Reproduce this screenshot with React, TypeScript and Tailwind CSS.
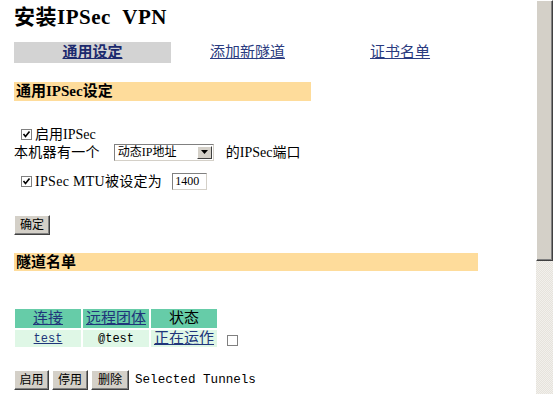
import React from "react";

const serif = { fontFamily: '"Liberation Serif", "Noto Sans CJK SC", serif' };
const mono = { fontFamily: '"Liberation Mono", "Noto Sans CJK SC", monospace' };

function Btn({ children, w }: { children: React.ReactNode; w: string }) {
  return (
    <button className={`${w} h-[20px] bg-[#d4d0c8] border border-t-white border-l-white border-r-[#404040] border-b-[#404040] shadow-[inset_-1px_-1px_0_#808080] text-[12px] leading-none text-black flex items-center justify-center`}>
      {children}
    </button>
  );
}

function Check() {
  return (
    <span className="inline-flex w-[11px] h-[11px] border border-[#808080] bg-white items-center justify-center mr-[3px]">
      <svg width="9" height="9" viewBox="0 0 9 9">
        <path d="M1.5 4 L3.5 6.5 L7.5 1.5" stroke="#000" strokeWidth="1.6" fill="none" />
      </svg>
    </span>
  );
}

export default function App() {
  return (
    <div className="w-[554px] h-[394px] overflow-hidden bg-white flex text-black" style={serif}>
      <div className="flex-1 pl-[14px] pt-[4px]">
        <div className="text-[21px] leading-[26px] font-bold tracking-[0.5px]">安装IPSec&nbsp;&nbsp;VPN</div>
        <div className="mt-[12px] flex items-center h-[21px] text-[15px]">
          <div className="w-[157px] h-[21px] bg-[#d3d3d3] flex items-center justify-center">
            <a className="font-bold underline text-[#1c2a6e]">通用设定</a>
          </div>
          <a className="ml-[39px] underline text-[#2a3b80]">添加新隧道</a>
          <a className="ml-[85px] underline text-[#2a3b80]">证书名单</a>
        </div>
        <div className="mt-[19px] w-[297px] h-[19px] bg-[#fedc9b] flex items-center pl-[2px] text-[15px] font-bold">通用IPSec设定</div>
        <div className="mt-[24px] pl-[7px] flex items-center h-[18px] text-[14px]">
          <Check />启用IPSec
        </div>
        <div className="flex items-center h-[18px] text-[14px]">
          <span className="tracking-[0.3px]">本机器有一个</span>
          <span className="ml-[14px] inline-flex items-center w-[100px] h-[17px] border border-t-[#808080] border-l-[#808080] border-r-[#d4d0c8] border-b-[#d4d0c8] bg-white text-[12px] pl-[3px]">
            <span className="flex-1">动态IP地址</span>
            <span className="w-[15px] h-[13px] bg-[#d4d0c8] border border-t-white border-l-white border-r-[#404040] border-b-[#404040] flex items-center justify-center mr-[1px]">
              <svg width="7" height="4" viewBox="0 0 7 4"><path d="M0 0 H7 L3.5 4 Z" fill="#000" /></svg>
            </span>
          </span>
          <span className="ml-[12px]">的IPSec端口</span>
        </div>
        <div className="pl-[7px] flex items-center h-[18px] text-[14px] mt-[11px]">
          <Check /><span className="tracking-[0.3px]">IPSec MTU被设定为</span>
          <span className="ml-[10px] inline-flex items-center w-[35px] h-[17px] border border-t-[#808080] border-l-[#808080] border-r-[#d4d0c8] border-b-[#d4d0c8] bg-white text-[12px] pl-[2px]">1400</span>
        </div>
        <div className="mt-[25px]"><Btn w="w-[36px]">确定</Btn></div>
        <div className="mt-[18px] w-[464px] h-[18px] bg-[#fedc9b] flex items-center pl-[2px] text-[15px] font-bold">隧道名单</div>
        <div className="mt-[38px] flex flex-col gap-[2px] text-[15px] pl-[1px]">
          <div className="flex gap-[2px] h-[19px]">
            <div className="w-[66px] bg-[#66cca8] flex items-center justify-center"><a className="underline text-[#20357a]">连接</a></div>
            <div className="w-[66px] bg-[#66cca8] flex items-center justify-center"><a className="underline text-[#20357a]">远程团体</a></div>
            <div className="w-[66px] bg-[#66cca8] flex items-center justify-center">状态</div>
          </div>
          <div className="flex gap-[2px] h-[17px] items-center">
            <div className="w-[66px] h-full bg-[#dff7e6] flex items-center justify-center text-[12px]" style={mono}><a className="underline text-[#20357a]">test</a></div>
            <div className="w-[66px] h-full bg-[#dff7e6] flex items-center justify-center text-[12px]" style={mono}>@test</div>
            <div className="w-[66px] h-full bg-[#dff7e6] flex items-center justify-center"><a className="underline text-[#20357a]">正在运作</a></div>
            <span className="ml-[8px] w-[11px] h-[11px] border border-[#808080] bg-white mt-[3px]" />
          </div>
        </div>
        <div className="mt-[23px] flex items-center gap-[3px]">
          <Btn w="w-[35px]">启用</Btn><Btn w="w-[36px]">停用</Btn><Btn w="w-[38px]">删除</Btn>
          <span className="text-[12.6px] ml-[3px]" style={mono}>Selected Tunnels</span>
        </div>
      </div>
      <div className="w-[17px] h-full flex flex-col mr-[1px] bg-[#eeece6]">
        <div className="h-[261px] bg-[#d4d0c8] border border-t-white border-l-white border-r-[#404040] border-b-[#404040] shadow-[inset_-1px_-1px_0_#808080]" />
        <div className="flex-1 bg-[repeating-conic-gradient(#f2f0ec_0%_25%,#e6e3dc_0%_50%)] bg-[length:2px_2px]" />
      </div>
    </div>
  );
}
